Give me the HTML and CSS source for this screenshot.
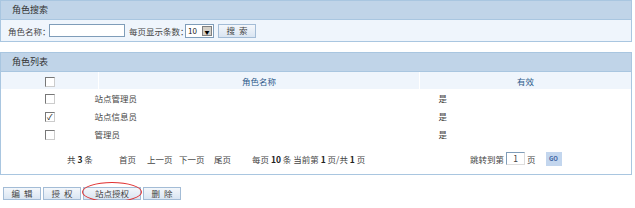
FILE: index.html
```html
<!DOCTYPE html>
<html lang="zh-CN">
<head>
    <meta charset="UTF-8">
    <title>角色管理</title>
    <link rel="stylesheet" href="styles.css">
</head>
<body>
    <div class="panel search">
        <div class="panel-title">角色搜索</div>
        <div class="search-body">
            <span class="label">角色名称：</span>
            <input class="name-input" type="text">
            <span class="per-page">每页显示条数：</span>
            <span class="select"><span class="select-val">10</span><span class="select-btn">&#9660;</span></span>
            <button class="btn search-btn">搜&nbsp;&nbsp;索</button>
        </div>
    </div>

    <div class="panel list">
        <div class="panel-title">角色列表</div>
        <table class="grid">
            <tr class="head">
                <td class="col-check"><span class="check"></span></td>
                <td class="col-name">角色名称</td>
                <td class="col-valid">有效</td>
            </tr>
            <tr>
                <td class="col-check"><span class="check"></span></td>
                <td class="cell-name">站点管理员</td>
                <td class="cell-valid">是</td>
            </tr>
            <tr>
                <td class="col-check"><span class="check checked">&#10003;</span></td>
                <td class="cell-name">站点信息员</td>
                <td class="cell-valid">是</td>
            </tr>
            <tr>
                <td class="col-check"><span class="check"></span></td>
                <td class="cell-name">管理员</td>
                <td class="cell-valid">是</td>
            </tr>
        </table>
        <div class="pager">
            <span class="total">共 <b>3</b> 条</span>
            <span class="first">首页</span>
            <span class="prev">上一页</span>
            <span class="next">下一页</span>
            <span class="last">尾页</span>
            <span class="info">每页 <b>10</b> 条 当前第 <b>1</b> 页/共 <b>1</b> 页</span>
            <span class="jump">跳转到第<span class="page-input">1</span>页</span>
            <span class="go">GO</span>
        </div>
    </div>

    <div class="actions">
        <button class="btn">编&nbsp;&nbsp;辑</button>
        <button class="btn">授&nbsp;&nbsp;权</button>
        <span class="marked">
            <button class="btn wide">站点授权</button>
            <span class="ring"></span>
        </span>
        <button class="btn">删&nbsp;&nbsp;除</button>
    </div>
</body>
</html>
```

FILE: styles.css
```css
body {
    margin: 0;
    font-family: "Noto Sans CJK SC", "DejaVu Sans", sans-serif;
    font-size: 8.5px;
    color: #444;
    background: #fff;
}

.panel {
    width: 630px;
    border: 1px solid #a9c6e0;
    background: #eff5fc;
}

.panel-title {
    height: 18px;
    line-height: 18px;
    padding-left: 11px;
    background: #c0d4e8;
    border-bottom: 1px solid #a9c6e0;
    color: #333;
    font-size: 9px;
}

.search-body {
    height: 21px;
    display: flex;
    align-items: center;
    padding-left: 7px;
    white-space: nowrap;
}

.label {
    width: 41px;
}

.name-input {
    width: 74px;
    height: 11px;
    margin: 0 4px 0 0;
    padding: 0;
    border: 1px solid #7f9db9;
    background: #fff;
}

.per-page {
    width: 56px;
}

.select {
    display: inline-flex;
    width: 27px;
    height: 12px;
    border: 1px solid #7f9db9;
    background: #fff;
    margin-right: 4px;
}

.select-val {
    flex: 1;
    line-height: 12px;
    padding-left: 2px;
    font-size: 8px;
    color: #222;
}

.select-btn {
    width: 10px;
    height: 10px;
    margin: 1px;
    background: #d4d0c8;
    border: 1px solid #808080;
    box-sizing: border-box;
    font-size: 5px;
    line-height: 9px;
    text-align: center;
    color: #000;
}

.btn {
    width: 38px;
    height: 13px;
    padding: 0;
    border: 1px solid #a3bcd6;
    background: linear-gradient(#f4f7fb, #d9e5f2);
    font-family: inherit;
    font-size: 8.5px;
    line-height: 11px;
    color: #444;
}

.search-btn {
    height: 14px;
}

.list {
    margin-top: 10px;
    background: #fff;
}

.grid {
    width: 100%;
    border-collapse: collapse;
}

.grid td {
    height: 18px;
    padding: 0;
}

.grid .head td {
    height: 17px;
    background: #eff5fc;
    color: #2d5b8b;
    text-align: center;
}

.grid .head .col-check,
.grid .head .col-name {
    border-right: 1px solid #fff;
}

.col-check {
    width: 97px;
    text-align: center;
}

.col-name {
    width: 320px;
}

.cell-name {
    text-indent: -4px;
}

.grid .cell-valid {
    padding-left: 19px;
}

.check {
    display: inline-block;
    width: 8px;
    height: 8px;
    border: 1px solid #777;
    border-right-color: #ccc;
    border-bottom-color: #ccc;
    background: #fff;
    vertical-align: middle;
    font-size: 8px;
    line-height: 8px;
    color: #000;
    text-align: center;
    text-indent: 0;
}

.pager {
    height: 31px;
    display: flex;
    align-items: center;
    padding-left: 66px;
    white-space: nowrap;
}

.pager b {
    font-weight: bold;
    color: #222;
}

.total {
    width: 52px;
}

.first {
    width: 28px;
}

.prev {
    width: 32px;
}

.next {
    width: 35px;
}

.last {
    width: 38px;
}

.info {
    width: 218px;
}

.jump {
    display: flex;
    align-items: center;
}

.page-input {
    width: 17px;
    height: 11px;
    margin: 0 2px;
    border: 1px solid #7f9db9;
    border-right-color: #ddd;
    border-bottom-color: #ddd;
    text-align: center;
    line-height: 11px;
}

.go {
    margin-left: 10px;
    width: 16px;
    height: 14px;
    background: #c3d6ee;
    color: #3c62a0;
    font-size: 6px;
    line-height: 14px;
    text-align: center;
    font-weight: bold;
}

.actions {
    display: flex;
    gap: 2px;
    margin-top: 12px;
    padding-left: 3px;
}

.marked {
    position: relative;
    display: inline-block;
}

.wide {
    width: 58px;
}

.ring {
    position: absolute;
    left: -1px;
    top: -5px;
    width: 58px;
    height: 18px;
    border: 1px solid #e03030;
    border-radius: 50%;
}
```
